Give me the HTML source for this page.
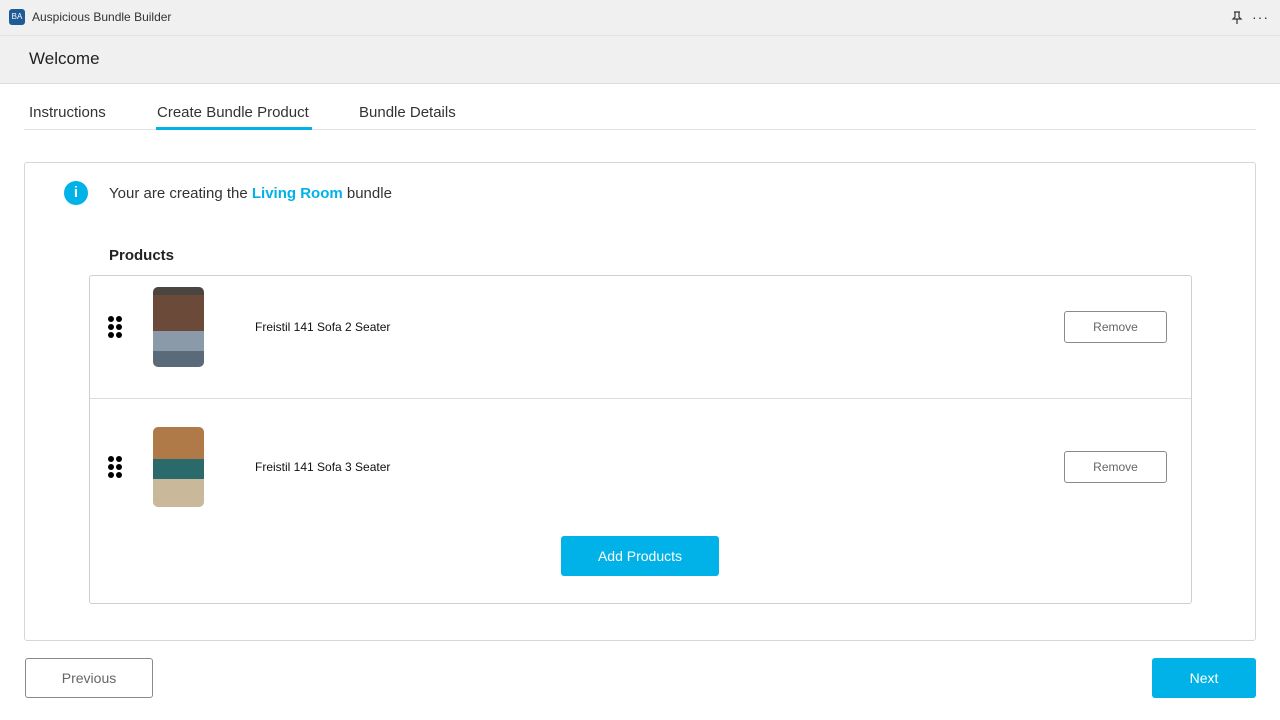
<!DOCTYPE html>
<html><head><style>
body{margin:0;width:1280px;height:720px;background:#fff;font-family:"Liberation Sans",sans-serif;position:relative;overflow:hidden;color:#222}
.abs{position:absolute}
.top{left:0;top:0;width:1280px;height:35px;background:#f0f0f0;border-bottom:1px solid #e4e4e4}
.hdr{left:0;top:36px;width:1280px;height:47px;background:#f0f0f0;border-bottom:1px solid #ddd}
.btn{position:absolute;border:1px solid #8a8a8a;border-radius:3px;font-size:12px;color:#666;text-align:center;box-sizing:border-box;background:#fff}
.dots{position:absolute;width:14px;height:22px}
.dots i{position:absolute;width:6px;height:6px;border-radius:50%;background:#000}
</style></head><body>
<div class="abs top"></div>
<div class="abs" style="left:9px;top:9px;width:16px;height:16px;background:#1d5a96;border-radius:3px;color:#fff;font-size:8px;line-height:16px;text-align:center">BA</div>
<div class="abs" style="left:32px;top:10px;font-size:12px;color:#333">Auspicious Bundle Builder</div>
<svg class="abs" style="left:1230px;top:11px" width="14" height="14" viewBox="0 0 14 14"><path d="M4 1h6M5 1v5L3 8h8L9 6V1M7 8v5" stroke="#333" stroke-width="1.2" fill="none"/></svg>
<div class="abs" style="left:1252px;top:10px;font-size:14px;color:#333;letter-spacing:1px;line-height:14px">···</div>
<div class="abs hdr"></div>
<div class="abs" style="left:29px;top:49px;font-size:17px;color:#222">Welcome</div>
<div class="abs" style="left:29px;top:104px;font-size:15px;color:#333">Instructions</div>
<div class="abs" style="left:157px;top:104px;font-size:15px;color:#333">Create Bundle Product</div>
<div class="abs" style="left:359px;top:104px;font-size:15px;color:#333">Bundle Details</div>
<div class="abs" style="left:24px;top:129px;width:1232px;height:1px;background:#e3e3e3"></div>
<div class="abs" style="left:156px;top:127px;width:156px;height:3px;background:#00b2e8"></div>
<div class="abs" style="left:24px;top:162px;width:1232px;height:479px;border:1px solid #d6d6d6;border-radius:3px;box-sizing:border-box"></div>
<div class="abs" style="left:64px;top:181px;width:24px;height:24px;border-radius:50%;background:#00b2e8;color:#fff;font-weight:bold;font-size:15px;text-align:center;line-height:24px">i</div>
<div class="abs" style="left:109px;top:185px;font-size:15px;color:#333">Your are creating the <b style="color:#00b2e8">Living Room</b> bundle</div>
<div class="abs" style="left:109px;top:247px;font-size:15px;font-weight:bold;color:#222">Products</div>
<div class="abs" style="left:89px;top:275px;width:1103px;height:329px;border:1px solid #cfcfcf;border-radius:3px;box-sizing:border-box"></div>
<div class="abs" style="left:90px;top:398px;width:1101px;height:1px;background:#ddd"></div>
<div class="dots" style="left:108px;top:316px"><i style="left:0;top:0"></i><i style="left:8px;top:0"></i><i style="left:0;top:8px"></i><i style="left:8px;top:8px"></i><i style="left:0;top:16px"></i><i style="left:8px;top:16px"></i></div>
<div class="dots" style="left:108px;top:456px"><i style="left:0;top:0"></i><i style="left:8px;top:0"></i><i style="left:0;top:8px"></i><i style="left:8px;top:8px"></i><i style="left:0;top:16px"></i><i style="left:8px;top:16px"></i></div>
<div class="abs" style="left:153px;top:287px;width:51px;height:80px;border-radius:5px;background:linear-gradient(#4a4540 0 10%,#6b4a3a 10% 55%,#8a9aa8 55% 80%,#5a6a78 80%)"></div>
<div class="abs" style="left:153px;top:427px;width:51px;height:80px;border-radius:5px;background:linear-gradient(#b07a48 0 40%,#2a6a6a 40% 65%,#c9b89a 65%)"></div>
<div class="abs" style="left:255px;top:320px;font-size:12px;color:#111">Freistil 141 Sofa 2 Seater</div>
<div class="abs" style="left:255px;top:460px;font-size:12px;color:#111">Freistil 141 Sofa 3 Seater</div>
<div class="btn" style="left:1064px;top:311px;width:103px;height:32px;line-height:30px">Remove</div>
<div class="btn" style="left:1064px;top:451px;width:103px;height:32px;line-height:30px">Remove</div>
<div class="abs" style="left:561px;top:536px;width:158px;height:40px;background:#00b2e8;border-radius:3px;color:#fff;font-size:14px;text-align:center;line-height:40px">Add Products</div>
<div class="btn" style="left:25px;top:658px;width:128px;height:40px;line-height:38px;font-size:14px">Previous</div>
<div class="abs" style="left:1152px;top:658px;width:104px;height:40px;background:#00b2e8;border-radius:3px;color:#fff;font-size:14px;text-align:center;line-height:40px">Next</div>
</body></html>
